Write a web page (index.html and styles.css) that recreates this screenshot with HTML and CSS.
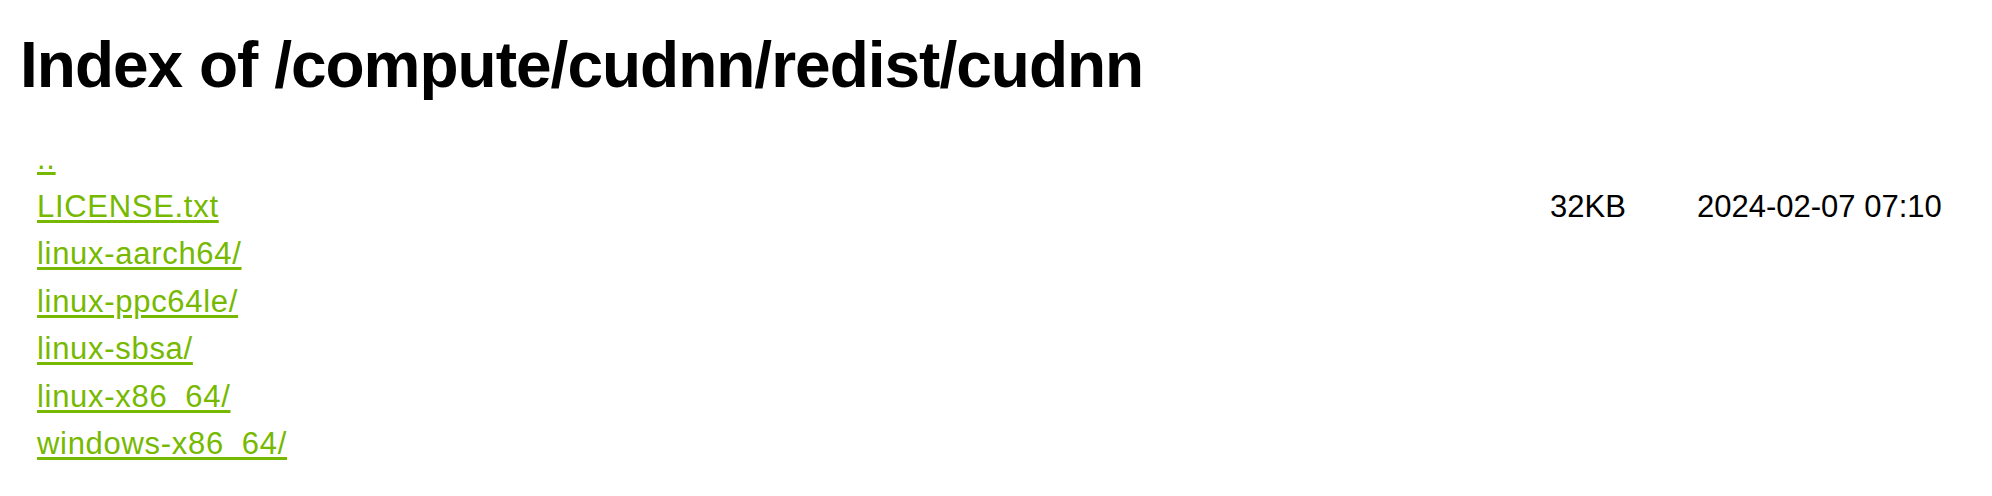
FILE: index.html
```html
<!DOCTYPE html>
<html>
<head>
<meta charset="utf-8">
<title>Index of /compute/cudnn/redist/cudnn</title>
<link rel="stylesheet" href="styles.css">
</head>
<body>
<h1 class="title">Index of /compute/cudnn/redist/cudnn</h1>
<div class="listing">
  <div class="row"><a class="name" href="#">..</a><span class="size"></span><span class="date"></span></div>
  <div class="row"><a class="name" href="#">LICENSE.txt</a><span class="size">32KB</span><span class="date">2024-02-07 07:10</span></div>
  <div class="row"><a class="name" href="#">linux-aarch64/</a><span class="size"></span><span class="date"></span></div>
  <div class="row"><a class="name" href="#">linux-ppc64le/</a><span class="size"></span><span class="date"></span></div>
  <div class="row"><a class="name" href="#">linux-sbsa/</a><span class="size"></span><span class="date"></span></div>
  <div class="row"><a class="name" href="#">linux-x86_64/</a><span class="size"></span><span class="date"></span></div>
  <div class="row"><a class="name" href="#">windows-x86_64/</a><span class="size"></span><span class="date"></span></div>
</div>
</body>
</html>
```
FILE: styles.css
```css
html, body {
  margin: 0;
  padding: 0;
  background: #ffffff;
}
body {
  font-family: "Liberation Sans", Arial, sans-serif;
  color: #000000;
}
.title {
  margin: 0;
  padding: 28px 0 0 20px;
  font-size: 64px;
  line-height: 74px;
  font-weight: 700;
  letter-spacing: -1px;
}
.listing {
  margin-top: 33px;
  padding-left: 37px;
  font-size: 31px;
  line-height: 47.5px;
}
.row {
  display: grid;
  grid-template-columns: 1fr 147px 295px;
}
.name {
  justify-self: start;
  color: #76b900;
  letter-spacing: 0.7px;
  text-decoration: underline;
  text-decoration-thickness: 3px;
  text-underline-offset: 3px;
}
.size, .date {
  color: #000000;
}
```
